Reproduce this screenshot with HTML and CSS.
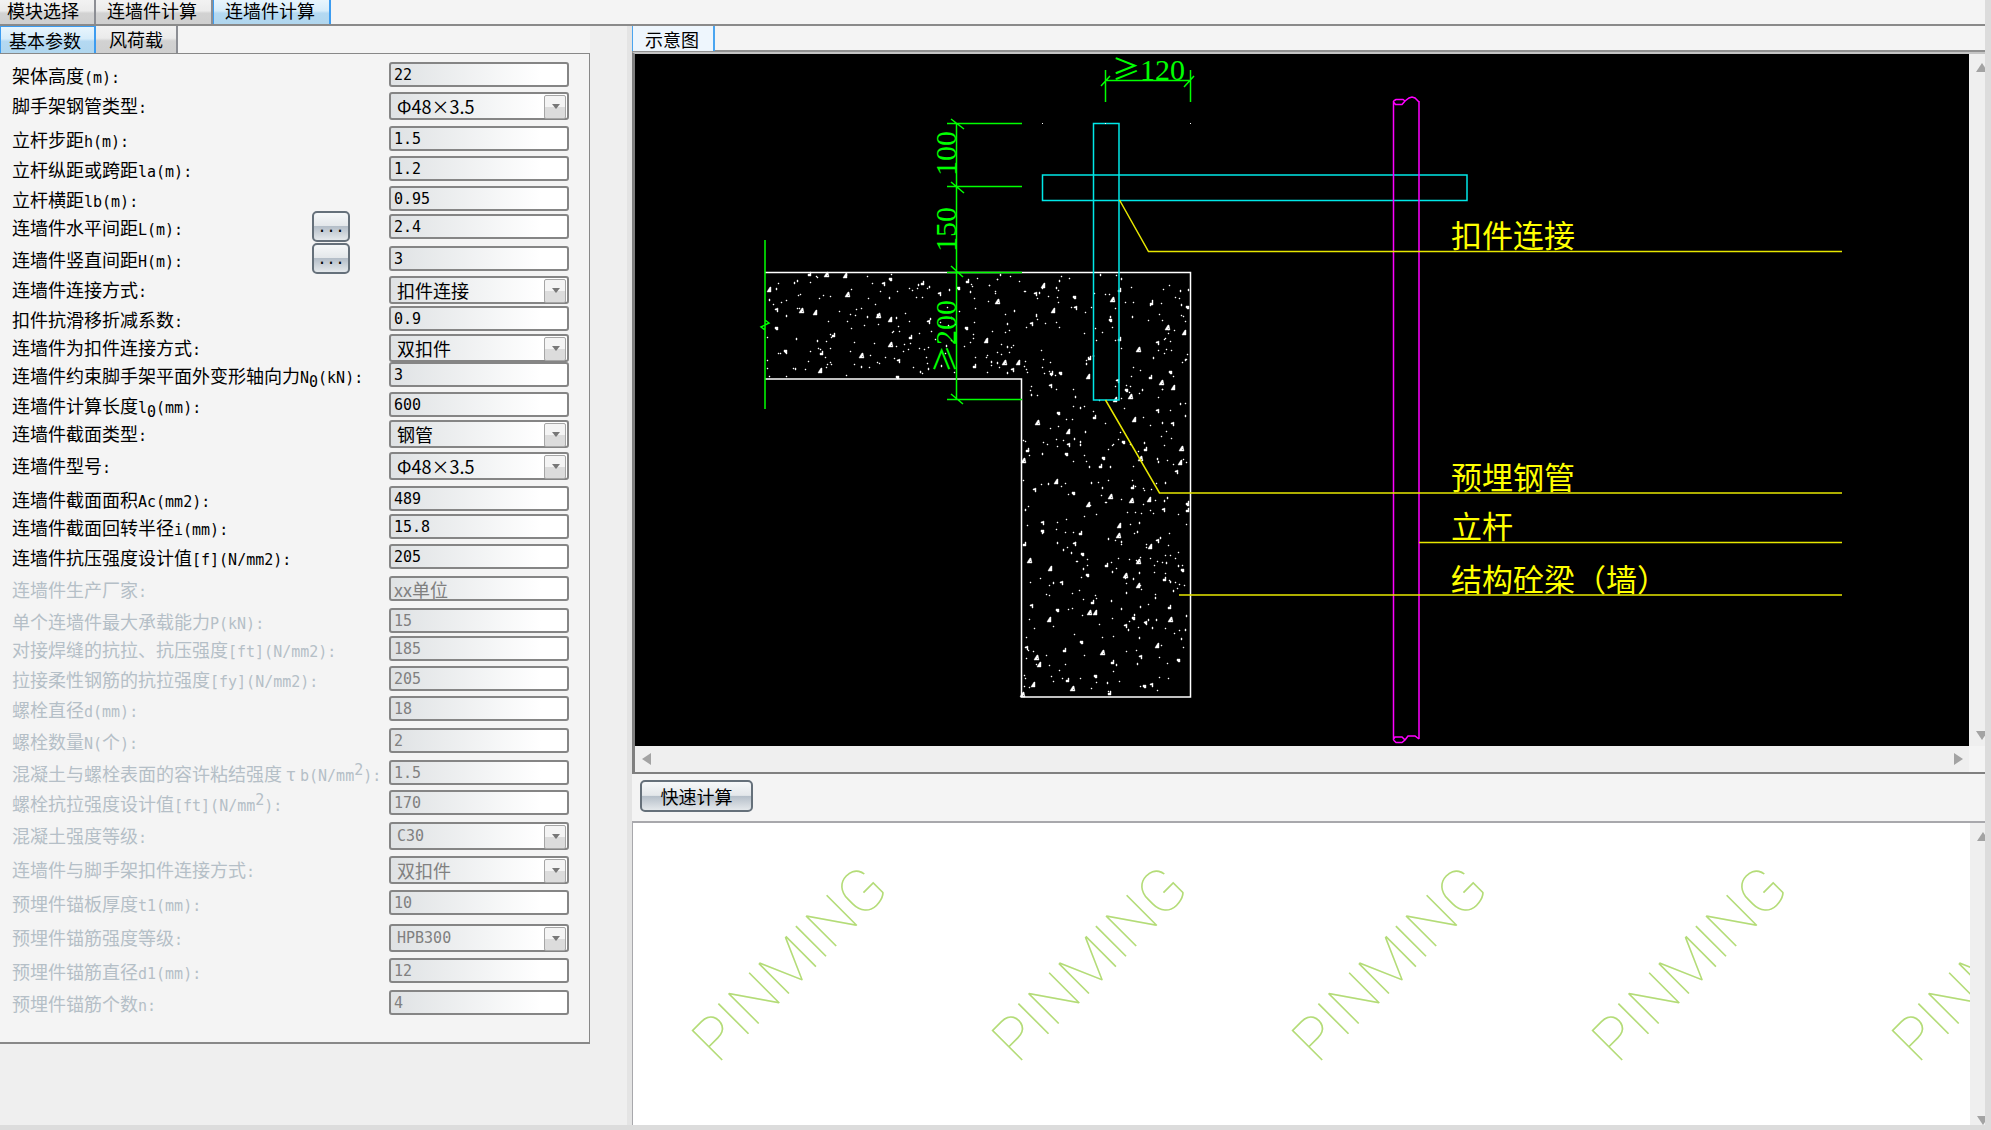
FILE: index.html
```html
<!DOCTYPE html>
<html lang="zh-CN">
<head>
<meta charset="utf-8">
<title>连墙件计算</title>
<link rel="stylesheet" href="styles.css">
</head>
<body>
<div class="app">
  <nav class="tabs module-tabs">
    <button class="tab" type="button">模块选择</button>
    <button class="tab" type="button">连墙件计算</button>
    <button class="tab active" type="button">连墙件计算</button>
  </nav>
  <div class="body">
    <aside class="side">
      <nav class="tabs param-tabs">
        <button class="tab active" type="button">基本参数</button>
        <button class="tab" type="button">风荷载</button>
      </nav>
      <form class="params">
        <div class="row r30"><label for="f1">架体高度<span class="l">(m):</span></label><input id="f1" value="22"></div>
        <div class="row r34"><label for="f2">脚手架钢管类型<span class="l">:</span></label><span class="drop"><select id="f2"><option>Φ48×3.5</option></select></span></div>
        <div class="row r30"><label for="f3">立杆步距<span class="l">h(m):</span></label><input id="f3" value="1.5"></div>
        <div class="row r30"><label for="f4">立杆纵距或跨距<span class="l">la(m):</span></label><input id="f4" value="1.2"></div>
        <div class="row r28"><label for="f5">立杆横距<span class="l">lb(m):</span></label><input id="f5" value="0.95"></div>
        <div class="row r32"><label for="f6">连墙件水平间距<span class="l">L(m):</span></label><button class="push more" type="button">...</button><input id="f6" value="2.4"></div>
        <div class="row r30"><label for="f7">连墙件竖直间距<span class="l">H(m):</span></label><button class="push more" type="button">...</button><input id="f7" value="3"></div>
        <div class="row r30"><label for="f8">连墙件连接方式<span class="l">:</span></label><span class="drop"><select id="f8"><option>扣件连接</option></select></span></div>
        <div class="row r28"><label for="f9">扣件抗滑移折减系数<span class="l">:</span></label><input id="f9" value="0.9"></div>
        <div class="row r28"><label for="f10">连墙件为扣件连接方式<span class="l">:</span></label><span class="drop"><select id="f10"><option>双扣件</option></select></span></div>
        <div class="row r30"><label for="f11">连墙件约束脚手架平面外变形轴向力<span class="l">N<sub>0</sub>(kN):</span></label><input id="f11" value="3"></div>
        <div class="row r28"><label for="f12">连墙件计算长度<span class="l">l<sub>0</sub>(mm):</span></label><input id="f12" value="600"></div>
        <div class="row r32"><label for="f13">连墙件截面类型<span class="l">:</span></label><span class="drop"><select id="f13"><option>钢管</option></select></span></div>
        <div class="row r34"><label for="f14">连墙件型号<span class="l">:</span></label><span class="drop"><select id="f14"><option>Φ48×3.5</option></select></span></div>
        <div class="row r28"><label for="f15">连墙件截面面积<span class="l">Ac(mm2):</span></label><input id="f15" value="489"></div>
        <div class="row r30"><label for="f16">连墙件截面回转半径<span class="l">i(mm):</span></label><input id="f16" value="15.8"></div>
        <div class="row r32"><label for="f17">连墙件抗压强度设计值<span class="l">[f](N/mm2):</span></label><input id="f17" value="205"></div>
        <div class="row r32 off"><label for="f18">连墙件生产厂家<span class="l">:</span></label><input class="cjk" id="f18" value="xx单位" disabled></div>
        <div class="row r28 off"><label for="f19">单个连墙件最大承载能力<span class="l">P(kN):</span></label><input id="f19" value="15" disabled></div>
        <div class="row r30 off"><label for="f20">对接焊缝的抗拉、抗压强度<span class="l">[ft](N/mm2):</span></label><input id="f20" value="185" disabled></div>
        <div class="row r30 off"><label for="f21">拉接柔性钢筋的抗拉强度<span class="l">[fy](N/mm2):</span></label><input id="f21" value="205" disabled></div>
        <div class="row r32 off"><label for="f22">螺栓直径<span class="l">d(mm):</span></label><input id="f22" value="18" disabled></div>
        <div class="row r32 off"><label for="f23">螺栓数量<span class="l">N(</span>个<span class="l">):</span></label><input id="f23" value="2" disabled></div>
        <div class="row r30 off"><label for="f24">混凝土与螺栓表面的容许粘结强度<span class="tau">τ</span><span class="l">b(N/mm<sup>2</sup>):</span></label><input id="f24" value="1.5" disabled></div>
        <div class="row r32 off"><label for="f25">螺栓抗拉强度设计值<span class="l">[ft](N/mm<sup>2</sup>):</span></label><input id="f25" value="170" disabled></div>
        <div class="row r34 off"><label for="f26">混凝土强度等级<span class="l">:</span></label><span class="drop"><select class="num" id="f26" disabled><option>C30</option></select></span></div>
        <div class="row r34 off"><label for="f27">连墙件与脚手架扣件连接方式<span class="l">:</span></label><span class="drop"><select id="f27" disabled><option>双扣件</option></select></span></div>
        <div class="row r34 off"><label for="f28">预埋件锚板厚度<span class="l">t1(mm):</span></label><input id="f28" value="10" disabled></div>
        <div class="row r34 off"><label for="f29">预埋件锚筋强度等级<span class="l">:</span></label><span class="drop"><select class="num" id="f29" disabled><option>HPB300</option></select></span></div>
        <div class="row r32 off"><label for="f30">预埋件锚筋直径<span class="l">d1(mm):</span></label><input id="f30" value="12" disabled></div>
        <div class="row r32 off"><label for="f31">预埋件锚筋个数<span class="l">n:</span></label><input id="f31" value="4" disabled></div>
      </form>
    </aside>
    <div class="splitter"></div>
    <main class="main">
      <nav class="tabs view-tabs">
        <button class="tab" type="button">示意图</button>
      </nav>
      <section class="viewer">
        <div class="canvas">
          <svg class="drawing" viewBox="635 54 1334 692" role="img" aria-label="示意图">
            <g id="hatch" class="hatch"></g>
            <path class="ln white" d="M765 272.500H1190.500V697H1021.500V379H765"/>
            <path class="ln cyan" d="M1093.500 123.500H1119V400H1093.500ZM1042.500 175H1467V200.500H1042.500Z"/>
            <path class="ln magenta" d="M1393.500 101V740M1419 101V739M1393.500 101L1396 99.500H1403L1405 101L1402 104.500H1395.500L1393.500 102M1405 101L1409 98L1412 97L1415 98L1419 102M1393.500 740L1396 742.500H1402L1405 740L1402 737H1395L1393.500 739M1405 740L1408 736H1415L1419 739"/>
            <path class="ln green" d="M765 240V409M765 320L769 323L761 327L765 330M956.500 123V400M947 123.500H1022M947 186.500H1022M947 272.500H1022M947 399.500H1022M951 119L964 129M951 182L964 193M951 266L963 277M951 394L963 404M1105.500 70V102M1190.500 70V102M1105.500 80.500H1190.500M1101 86L1110 76M1184 87L1194 76"/>
            <path class="ln yellow" d="M1119.500 200L1148.500 251.500H1842M1105.500 400L1159.500 493H1842M1419 542.500H1842M1179 595H1842"/>
            <path d="M1042 123h1v1h-1zM1105 123h1v1h-1zM1190 123h1v1h-1z" fill="#fff"/>
            <g class="dims">
              <text x="1112" y="80"><tspan class="ge">≥</tspan>120</text>
              <text transform="translate(956 176) rotate(-90)">100</text>
              <text transform="translate(956 252) rotate(-90)">150</text>
              <text transform="translate(956 373) rotate(-90)"><tspan class="ge">≥</tspan>200</text>
            </g>
            <g class="notes">
              <text x="1451" y="247">扣件连接</text>
              <text x="1451" y="489">预埋钢管</text>
              <text x="1451" y="538">立杆</text>
              <text x="1451" y="591">结构砼梁（墙）</text>
            </g>
          </svg>
        </div>
        <div class="vbar"><i class="up"></i><i class="down"></i></div>
        <div class="hbar"><i class="left"></i><i class="right"></i></div>
      </section>
      <div class="actions"><button class="push calc" type="button">快速计算</button></div>
      <section class="output">
        <div class="marks">
          <span>PINMING</span><span>PINMING</span><span>PINMING</span><span>PINMING</span><span>PINMING</span>
        </div>
        <div class="vbar"><i class="up"></i><i class="down"></i></div>
      </section>
    </main>
  </div>
</div>
<script src="hatch.js"></script>
</body>
</html>
```
FILE: hatch.js
```js
// Concrete hatch: stones at set places, sand scattered with a fixed seed.
// Stone places are in hatch units, turned into drawing units by toX / toY.
var toX = function (u) { return Math.round(620 + u / 2.24); };
var toY = function (u) { return Math.round(u / 3); };
var stones = [
  425,822,463,825,506,828,592,850,608,833,678,848,510,884,335,870,716,880,760,860,780,843,847,905,950,857,932,878,
  1020,888,1120,870,1105,900,972,932,1022,922,1272,918,1192,908,408,934,438,938,352,927,352,980,480,1005,580,947,
  608,960,693,963,777,980,652,1012,606,1035,822,1024,922,970,1100,958,1120,1017,1228,983,1265,998,1205,1027,372,1050,
  452,1058,543,1067,450,1113,624,1080,622,1128,795,1098,862,1088,893,1088,880,1107,988,1115,968,1118,1163,1050,
  1050,1130,1115,1140,1235,1113,1190,1130,1215,1150,1242,1165,965,1155,1135,1168,1052,1073,1145,1192,1110,1200,
  1205,1230,983,1237,1065,1250,937,1268,1005,1295,1005,1332,1002,1358,913,1350,905,1384,1153,1260,1238,1270,
  1130,1322,1178,1348,1258,1348,1256,1388,1247,1412,1084,1370,1078,1397,1168,1378,978,1447,930,1467,1018,1475,
  1148,1460,1147,1503,1188,1500,1218,1526,1272,1510,1272,1530,1100,1490,1050,1515,948,1565,947,1590,1033,1598,
  1118,1608,1119,1578,1020,1630,1036,1660,908,1633,918,1682,965,1706,990,1745,1049,1721,1090,1694,1162,1686,
  1190,1640,1204,1620,1262,1706,1220,1738,1134,1728,1162,1757,923,1814,980,1828,1060,1807,1052,1840,1066,1838,
  1178,1865,1151,1851,1232,1821,1235,1860,963,1861,1133,1875,1034,1924,996,1950,1082,1958,1204,1938,1168,1968,
  1252,1978,1105,1987,935,1975,941,1996,912,1940,1067,2024,1003,2040,1014,2068,928,2056,1192,2051,1175,2055,
  1097,2080,903,2086
];
var shapes = [
  'h2v-2h1v4h-3z',
  'l2 -3h1v5h-4z',
  'h3v3h-2v-1h-1z',
  'l2 -3h1l1 5h-5zm2 1h1v-1h-1z',
  'l3 -1v4h-1v-2h-2z'
];
var seed = 7;
function rnd() { seed = (seed * 16807) % 2147483647; return seed / 2147483647; }
var d = '';
for (var i = 0; i < stones.length; i += 2) {
  d += 'M' + (toX(stones[i]) - 2) + ' ' + toY(stones[i + 1]) + shapes[(i / 2 * 3) % 5];
}
function sand(count, x0, y0, w, h) {
  while (count--) {
    d += 'M' + Math.floor(x0 + rnd() * w) + ' ' + Math.floor(y0 + rnd() * h) + 'h1v' + (rnd() < 0.2 ? 2 : 1) + 'h-1z';
  }
}
sand(170, 767, 274, 254, 103);
sand(350, 1023, 274, 166, 421);
var path = document.createElementNS('http://www.w3.org/2000/svg', 'path');
path.setAttribute('d', d);
document.getElementById('hatch').appendChild(path);
```
FILE: styles.css
```css
* { box-sizing: border-box; }
html, body { margin: 0; }
body {
  background: #efefef;
  color: #000;
  font: 18px/28px "Noto Sans CJK SC", "Noto Sans", sans-serif;
}
button, input, select { font: inherit; color: inherit; margin: 0; border-radius: 0; }

.app {
  display: flex;
  flex-direction: column;
  min-height: 100vh;
  border-right: 6px solid #dcdcdc;
  border-bottom: 5px solid #dcdcdc;
}
.body { display: flex; flex: 1; }

/* tabs */
.tabs { display: flex; background: #f4f4f4; }
.tab {
  border: 0;
  border-right: 2px solid #8c8e94;
  padding: 0 10px 0 12px;
  background: linear-gradient(#f2f2f2 0%, #ebebeb 45%, #d2d2d2 55%, #cfcfcf 100%);
  white-space: nowrap;
}
.tab.active {
  border: 1px solid #3c9cf0;
  border-width: 1px 2px 0 1px;
  background: linear-gradient(#e8f5fd 0%, #d6ecfa 45%, #b4d9f2 55%, #b0d6ee 100%);
}
.module-tabs { height: 26px; border-bottom: 2px solid #8a8a8a; }
.module-tabs .tab { height: 24px; line-height: 20px; padding: 0 14px 4px 11px; }
.module-tabs .tab:first-child { padding-left: 7px; padding-right: 15px; }
.module-tabs .tab.active { border-top: 0; }

/* parameter panel */
.side { flex: 0 0 590px; }
.param-tabs { height: 27px; }
.param-tabs .tab { height: 27px; line-height: 26px; padding: 0 13px 1px; }
.param-tabs .tab:first-child { padding-left: 8px; }
.params {
  background: #f4f4f4;
  border: 1px solid #888;
  border-width: 1px 1px 2px 0;
  padding: 8px 20px 20px 12px;
}
.row { display: flex; align-items: flex-start; }
.r28 { height: 28px; }
.r30 { height: 30px; }
.r32 { height: 32px; }
.r34 { height: 34px; }
.row label { flex: 1; white-space: nowrap; height: 26px; line-height: 26px; }
.row .l { font: 15px/18px "DejaVu Sans Mono", monospace; }
.row .tau { display: inline-block; width: 18px; text-align: center; }
.row sub, .row sup { font-size: 15px; line-height: 0; }
.off label { color: #b5bfc7; }
.row input, .row select {
  width: 180px;
  border: 2px solid #858585;
  border-radius: 3px;
  background: linear-gradient(90deg, #dfe2e4, #fff 85%);
}
.row input {
  height: 25px;
  padding: 0 3px;
  font: 15px/20px "DejaVu Sans Mono", monospace;
}
.row input.cjk { font: 18px/20px "Noto Sans CJK SC", sans-serif; }
.row input:disabled, .row select:disabled { color: #808080; opacity: 1; }
.drop { position: relative; height: 28px; }
.row select {
  appearance: none;
  display: block;
  height: 28px;
  padding: 0 24px 0 6px;
  line-height: 24px;
}
.row select.num { font: 15px/24px "DejaVu Sans Mono", monospace; }
.drop::before {
  content: "";
  position: absolute;
  right: 3px;
  top: 3px;
  width: 20px;
  height: 22px;
  border: 1px solid #a6a6a6;
  border-radius: 2px;
  background: linear-gradient(#f4f4f4 50%, #dcdcdc 50%);
  pointer-events: none;
}
.drop::after {
  content: "";
  position: absolute;
  right: 9px;
  top: 12px;
  border: 4px solid transparent;
  border-top: 5px solid #777;
  border-bottom: 0;
  pointer-events: none;
}
.push {
  border: 2px solid #65707a;
  border-radius: 5px;
  background: linear-gradient(#f6f8f9 0%, #e3e7ea 48%, #b4bec8 50%, #e4e8eb 100%);
  padding: 0;
}
.more { width: 38px; height: 31px; margin: -3px 39px 0 0; line-height: 22px; font-family: "DejaVu Sans Mono", monospace; font-size: 15px; }

/* right side */
.splitter { flex: 0 0 42px; border-right: 5px solid #e4e4e4; }
.main { flex: 1; min-width: 0; display: flex; flex-direction: column; background: #f4f4f4; }
.view-tabs { height: 26px; border-bottom: 2px solid #909090; }
.view-tabs .tab {
  height: 25px;
  line-height: 24px;
  padding: 0 14px 0 12px;
  border: 2px solid #4aa5f0;
  border-width: 0 2px 0 1px;
  background: #eef6fd;
}
.viewer {
  display: grid;
  grid-template-columns: minmax(0, 1fr) 16px;
  border: 2px solid #808080;
  border-right: 0;
  border-left-width: 3px;
  border-top-color: #c4c4c4;
}
.canvas { background: #000; }
.drawing { display: block; width: 100%; height: auto; }
.hatch { fill: #fff; stroke: #fff; stroke-width: .4; }
.ln { fill: none; stroke-width: 1.5; }
.white { stroke: #fff; }
.cyan { stroke: #00e8e8; }
.magenta { stroke: #f0f; }
.green { stroke: #0f0; }
.yellow { stroke: #e6e600; }
.dims { fill: #0f0; font: 30px "Liberation Serif", serif; }
.dims .ge { font: 28px "Noto Sans CJK SC", sans-serif; }
.notes { fill: #ff0; font: 31px "Noto Sans CJK SC", sans-serif; }

.vbar, .hbar { display: flex; justify-content: space-between; align-items: center; background: #efefef; overflow: hidden; }
.vbar { flex-direction: column; align-items: flex-start; padding: 9px 0 6px 7px; }
.hbar { height: 26px; padding: 0 6px 0 7px; }
.up, .down, .left, .right { border: 6px solid transparent; }
.up { border-bottom: 9px solid #a3a3a3; border-top: 0; }
.down { border-top: 9px solid #a3a3a3; border-bottom: 0; }
.left { border-right: 9px solid #a3a3a3; border-left: 0; }
.right { border-left: 9px solid #a3a3a3; border-right: 0; }

.actions { padding: 6px 8px 9px; }
.calc { display: block; width: 113px; height: 32px; line-height: 26px; }
.output {
  flex: 1;
  min-height: 240px;
  display: grid;
  grid-template-columns: minmax(0, 1fr) 15px;
  background: #fff;
  border-top: 2px solid #a8a8ac;
  border-left: 1px solid #a8a8ac;
}
.output .vbar { padding-bottom: 0; }
.marks { display: flex; overflow: hidden; padding: 21px 0 0 7px; }
.marks span {
  flex: 0 0 300px;
  height: 240px;
  line-height: 240px;
  text-align: center;
  color: #b4dc78;
  font-family: Roboto, sans-serif;
  font-weight: 100;
  font-size: 60px;
  transform: rotate(-45deg);
}
```
